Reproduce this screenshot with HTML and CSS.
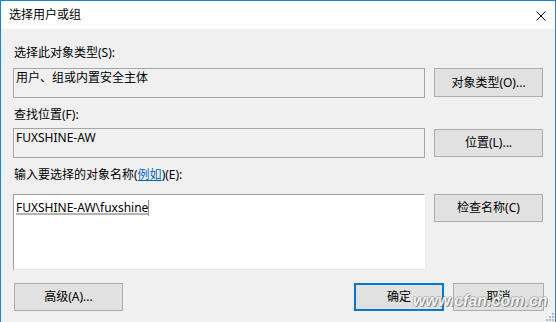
FILE: index.html
```html
<!DOCTYPE html>
<html lang="zh-CN">
<head>
<meta charset="utf-8">
<title>选择用户或组</title>
<link rel="stylesheet" href="styles.css">
</head>
<body>
<div class="win">
  <div class="titlebar">
    <span class="title">选择用户或组</span>
    <span class="close">
      <svg width="10" height="10" viewBox="0 0 10 10"><path d="M0.5 0.5 L9.5 9.5 M9.5 0.5 L0.5 9.5" stroke="#000" stroke-width="1" fill="none"/></svg>
    </span>
  </div>
  <div class="content">
    <div class="label l1">选择此对象类型(S):</div>
    <div class="row">
      <div class="field ro">用户、组或内置安全主体</div>
      <button class="btn">对象类型(O)...</button>
    </div>
    <div class="label l2">查找位置(F):</div>
    <div class="row r2">
      <div class="field ro">FUXSHINE-AW</div>
      <button class="btn">位置(L)...</button>
    </div>
    <div class="label l3">输入要选择的对象名称(<a class="link" href="#">例如</a>)(E):</div>
    <div class="row r3">
      <div class="field edit"><span class="name">FUXSHINE-AW\fuxshine</span></div>
      <button class="btn">检查名称(C)</button>
    </div>
    <div class="footer">
      <button class="btn adv">高级(A)...</button>
      <div class="actions">
        <button class="btn ok">确定</button>
        <button class="btn cancel">取消</button>
      </div>
    </div>
  </div>
  <div class="watermark">www.cfan.com.cn</div>
  <svg class="grip" width="9" height="9" viewBox="0 0 9 9">
    <rect x="7" y="1" width="2" height="2" fill="#b8b8b8"/>
    <rect x="4" y="4" width="2" height="2" fill="#b8b8b8"/>
    <rect x="7" y="4" width="2" height="2" fill="#b8b8b8"/>
    <rect x="1" y="7" width="2" height="2" fill="#b8b8b8"/>
    <rect x="4" y="7" width="2" height="2" fill="#b8b8b8"/>
    <rect x="7" y="7" width="2" height="2" fill="#b8b8b8"/>
  </svg>
</div>
</body>
</html>
```

FILE: styles.css
```css
html, body {
  margin: 0;
  padding: 0;
  width: 556px;
  height: 322px;
  overflow: hidden;
  background: #f0f0f0;
}
.win {
  position: relative;
  box-sizing: border-box;
  width: 556px;
  height: 322px;
  border: 1px solid #1883d7;
  border-bottom: none;
  background: #f0f0f0;
  font-family: "Noto Sans", "Noto Sans CJK SC", sans-serif;
  font-size: 12px;
  line-height: 16px;
  color: #000;
}
.titlebar {
  height: 28px;
  background: #fff;
  display: flex;
  align-items: center;
  justify-content: space-between;
  padding: 0 9px 0 8px;
}
.title {
  font-size: 12px;
}
.close {
  display: flex;
  margin-top: 1px;
}
.content {
  padding: 0 11px 0 12px;
}
.label {
  height: 16px;
  padding-left: 1px;
}
.l1 { margin-top: 16px; margin-bottom: 7px; }
.l2 { margin-top: 9px; margin-bottom: 5px; }
.l3 { margin-top: 9px; margin-bottom: 11px; }
.row {
  display: flex;
  align-items: flex-start;
  gap: 9px;
}
.field {
  box-sizing: border-box;
  width: 412px;
  height: 30px;
  border: 1px solid #a5a5a5;
  padding: 1px 2px;
  white-space: nowrap;
}
.field.ro {
  background: #f0f0f0;
}
.field.edit {
  height: 76px;
  background: #fff;
  border-color: #a0a0a0 #ffffff #e3e3e3 #a0a0a0;
  padding: 5px 2px;
}
.name {
  display: inline-block;
  line-height: 16px;
  text-decoration: underline;
  text-decoration-color: #b4b4b4;
  text-decoration-thickness: 2px;
  text-underline-offset: 1px;
  border-right: 1px solid #8a8a8a;
}
.btn {
  box-sizing: border-box;
  width: 109px;
  height: 29px;
  margin: 0;
  padding: 0;
  border: 1px solid #adadad;
  background: #e1e1e1;
  font-family: "Noto Sans", "Noto Sans CJK SC", sans-serif;
  font-size: 12px;
  line-height: 16px;
  color: #000;
  text-align: center;
}
.r2 .btn { margin-top: 1px; height: 28px; }
.r3 .btn { height: 28px; }
.link {
  color: #0066cc;
  text-decoration: underline;
}
.footer {
  display: flex;
  justify-content: space-between;
  margin-top: 13px;
}
.footer .btn { height: 28px; }
.adv { margin-left: 1px; }
.actions {
  display: flex;
  gap: 9px;
}
.ok {
  width: 90px;
  border: 2px solid #0078d7;
}
.cancel {
  width: 91px;
}
.watermark {
  position: absolute;
  left: 412px;
  top: 290px;
  font-family: "Liberation Sans", sans-serif;
  font-weight: bold;
  font-style: italic;
  font-size: 16px;
  line-height: 20px;
  color: rgba(255, 255, 255, 0.9);
  text-shadow: 1px 1px 0 rgba(110,110,110,0.7), -1px 0 0 rgba(140,140,140,0.5), 0 -1px 0 rgba(140,140,140,0.45), 1px 0 0 rgba(140,140,140,0.45);
  pointer-events: none;
}
.grip {
  position: absolute;
  right: 1px;
  bottom: 1px;
}
```
